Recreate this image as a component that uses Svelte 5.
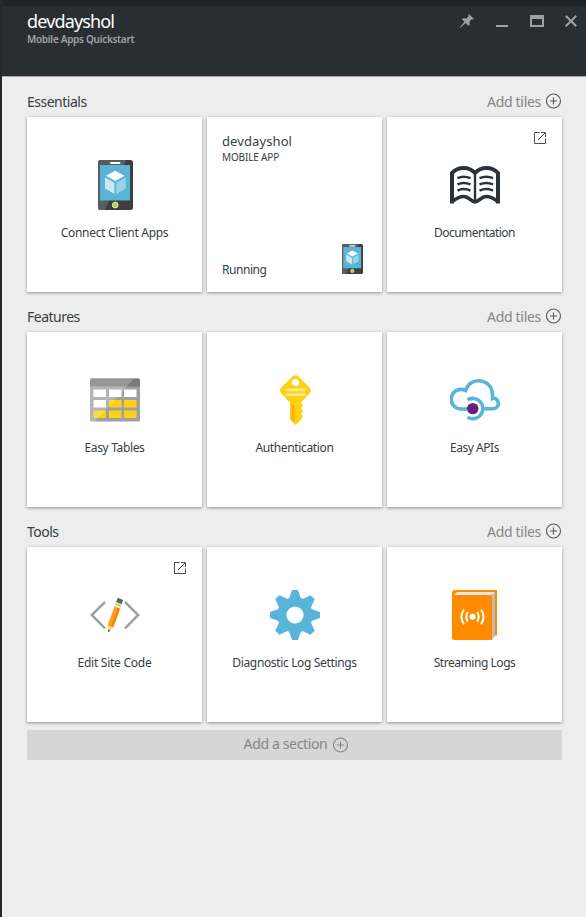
<script>
  const sections = [
    { title: 'Essentials', tiles: [
      { label: 'Connect Client Apps', icon: 'phone' },
      { label: 'devdayshol', resource: true },
      { label: 'Documentation', icon: 'book', external: true }
    ] },
    { title: 'Features', tiles: [
      { label: 'Easy Tables', icon: 'table' },
      { label: 'Authentication', icon: 'key' },
      { label: 'Easy APIs', icon: 'cloud' }
    ] },
    { title: 'Tools', tiles: [
      { label: 'Edit Site Code', icon: 'code', external: true },
      { label: 'Diagnostic Log Settings', icon: 'gear' },
      { label: 'Streaming Logs', icon: 'logs' }
    ] }
  ];
  const teeth = [0, 45, 90, 135, 180, 225, 270, 315];
</script>

{#snippet plus()}
  <svg class="plus" width="16" height="16" viewBox="0 0 16 16" fill="none" stroke="currentColor">
    <circle cx="7.500" cy="8" r="7" stroke-width="1.100" />
    <path d="M4 8h7M7.500 4.500v7" stroke-width="1.100" />
  </svg>
{/snippet}

{#snippet phone(w, h)}
  <svg width={w} height={h} viewBox="0 0 35 50">
    <rect width="35" height="50" rx="2.500" fill="#3e3e3e" />
    <path d="M2.500 0H28L7 50H2.500A2.500 2.500 0 0 1 0 47.500V2.500A2.500 2.500 0 0 1 2.500 0Z" fill="#5c5c5c" />
    <rect x="12" y="2" width="10.500" height="2" rx="1" fill="#fff" />
    <rect x="2" y="5" width="30" height="35.500" fill="#59b4d9" />
    <path d="M17.300 10.800 26.500 15.800 17.300 21 8 15.800Z" fill="#fff" />
    <path d="M7 17.500 16.500 22.800V34L7 28.500Z" fill="#cde8f4" />
    <path d="M27.800 17.500 18.200 22.800V34L27.800 28.500Z" fill="#9bd2e8" />
    <circle cx="17.200" cy="45" r="2.900" fill="#b8d432" stroke="#f4f8dc" stroke-width=".8" />
  </svg>
{/snippet}

{#snippet icon(name)}
  {#if name === 'phone'}
    {@render phone(35, 50)}
  {:else if name === 'book'}
    <svg width="50" height="50" viewBox="0 0 50 50" fill="none" stroke="#2b3238">
      <path d="M2 43.500V13Q6.500 8 13.500 8T25 13Q29.500 8 36.500 8T48 13V43.500" stroke-width="4" />
      <path d="M25 12V42" stroke-width="2.400" />
      <path d="M2 42Q8 36.500 14 36.500C19 36.500 21 42 25 42S31 36.500 36 36.500Q42 36.500 48 42" stroke-width="3.600" />
      <path d="M7.500 18.200Q13.500 15.200 20.500 18.200M7.500 24.400Q13.500 21.400 20.500 24.400M7.500 30.600Q13.500 27.600 20.500 30.600M29.500 18.200Q36.500 15.200 43 18.200M29.500 24.400Q36.500 21.400 43 24.400M29.500 30.600Q36.500 27.600 43 30.600" stroke-width="2.500" />
    </svg>
  {:else if name === 'table'}
    <svg width="50" height="50" viewBox="0 0 50 50">
      <rect y="4" width="50" height="43" rx="1.500" fill="#a0a0a0" transform="translate(0 -.5)" />
      <path d="M0 11.500V5Q0 3.500 1.500 3.500H48.500Q50 3.500 50 5V11.500Z" fill="#7a7a7a" />
      {#each [14.500, 25, 35.500] as y, row}
        {#each [3.500, 19, 34] as x, col}
          <rect {x} {y} width="12.500" height="7.500" fill={row === 2 || (row === 1 && col > 0) ? '#fcd116' : '#fff'} />
        {/each}
      {/each}
      <path d="M1.500 3.500H44L5 46.500H1.500Q0 46.500 0 45V5Q0 3.500 1.500 3.500Z" fill="#fff" opacity=".22" />
    </svg>
  {:else if name === 'key'}
    <svg width="50" height="50" viewBox="0 0 50 50">
      <path d="M22.500 1.500Q25.500-1.200 28.500 1.500L39.500 12.500Q42 15.500 39.500 18.500L31.500 27V29L33.200 30.500 31.500 32.500V34.500L33.200 36 31.500 38V39.500L33.200 41 31.500 43V44.500L25.500 50 20 44.500V27.500L11.200 18.500Q8.700 15.500 11.200 12.500Z" fill="#fcd116" />
      <circle cx="25.500" cy="7.500" r="3.500" fill="#fff" />
      <path d="M17 13.500H34.500A1 1 0 0 1 34.500 16.300H17A1 1 0 0 1 17 13.500M17 18.200H34.500A1 1 0 0 1 34.500 21H17A1 1 0 0 1 17 18.200" fill="#fee88b" />
      <path d="M21.500 29 24.800 30.500V47.500L21.500 44.500Z" fill="#ffb000" />
    </svg>
  {:else if name === 'cloud'}
    <svg width="50" height="50" viewBox="0 0 50 50" fill="none" stroke="#59b4d9" stroke-width="3.600">
      <path d="M20 34H12A9.800 9.800 0 1 1 15.500 15.500C18 9 23 5.800 28.500 5.800C36.500 5.800 42.500 12 42.500 19.500V23.500C46 22.500 48.300 25.500 48.300 28.500C48.300 31.500 46 33.700 43 33.700H33" />
      <path d="M17.500 24.800A10.200 10.200 0 1 1 17.500 42.300" />
      <circle cx="22.800" cy="33.600" r="5.700" fill="#68217a" stroke="none" />
    </svg>
  {:else if name === 'code'}
    <svg width="50" height="50" viewBox="0 0 50 50">
      <path d="M15 12 1.800 25 15 38.300M35 12 48.200 25 35 38.300" fill="none" stroke="#a0a0a0" stroke-width="2.500" />
      <g transform="translate(18.500 41.800) rotate(20)">
        <path d="M-3-6H3L.5 0H-.5Z" fill="#fcd57a" />
        <path d="M-.9-2H.9L.5 0H-.5Z" fill="#555" />
        <rect x="-3" y="-26" width="3" height="20" fill="#ff9c1a" />
        <rect y="-26" width="3" height="20" fill="#f58200" />
        <rect x="-3" y="-30.500" width="6" height="4.500" fill="#e5efc4" />
        <path d="M-3-28.500H3" stroke="#a3c94a" />
        <rect x="-3" y="-35" width="6" height="4.500" rx=".7" fill="#5f6268" />
      </g>
    </svg>
  {:else if name === 'gear'}
    <svg width="50" height="50" viewBox="-25 -25 50 50">
      {#each teeth as angle}
        <path d="M-6.500-15-2.900-25H2.900L6.500-15Z" transform="rotate({angle})" fill="#59b4d9" />
      {/each}
      <circle r="13.200" fill="none" stroke="#59b4d9" stroke-width="9.200" />
    </svg>
  {:else if name === 'logs'}
    <svg width="50" height="50" viewBox="0 0 50 50">
      <path d="M5 0H47V45.500H42V50H4Q2 50 2 48V3Q2 0 5 0Z" fill="#ff8c00" />
      <path d="M4 5 7 2H45L42 5Z" fill="#e6e6e6" />
      <path d="M42 5 45 2V46L42 49.500Z" fill="#bcbcbc" />
      <circle cx="22.500" cy="26.800" r="3" fill="#fff" />
      <path d="M17.800 22Q14.800 26.800 17.800 31.600M27.200 22Q30.200 26.800 27.200 31.600M14 19.500Q8.800 26.800 14 34.200M31 19.500Q36.200 26.800 31 34.200" fill="none" stroke="#fff" stroke-width="2" />
    </svg>
  {/if}
{/snippet}

<div class="blade">
  <header>
    <div class="heading">
      <h1>devdayshol</h1>
      <p>Mobile Apps Quickstart</p>
    </div>
    <div class="controls">
      <svg width="14" height="14" viewBox="0 0 14 14" fill="#a0a1a8"><path d="M8.800 0 14 5 12.500 5.500 11.500 5.200 9.500 7.500 9.700 11 8.400 11.700 5.600 9 .4 13.700 0 13.300 4.500 7.800 2 5.300 3 4.200 6.500 4.400 8.700 2.300 8.200 1Z" /></svg>
      <svg width="12" height="14" viewBox="0 0 12 14"><path d="M0 12H12" stroke="#a0a1a8" stroke-width="2" /></svg>
      <svg width="14" height="14" viewBox="0 0 14 14"><path d="M0 1H14V13H0ZM2 5V11H12V5Z" fill="#a0a1a8" fill-rule="evenodd" /></svg>
      <svg width="12" height="14" viewBox="0 0 12 14"><path d="M.7 1.700 11.300 12.300M11.300 1.700.7 12.300" stroke="#a0a1a8" stroke-width="2" /></svg>
    </div>
  </header>

  <main>
    {#each sections as section}
      <section>
        <div class="section-head">
          <h2>{section.title}</h2>
          <div class="add"><span>Add tiles</span>{@render plus()}</div>
        </div>
        <div class="tiles">
          {#each section.tiles as tile}
            {#if tile.resource}
              <div class="tile resource">
                <div class="name">{tile.label}</div>
                <div class="kind">MOBILE APP</div>
                <div class="status"><span>Running</span>{@render phone(21, 30)}</div>
              </div>
            {:else}
              <div class="tile">
                <div class="icon {tile.icon}">{@render icon(tile.icon)}</div>
                <div class="label {tile.icon}">{tile.label}</div>
                {#if tile.external}
                  <svg class="external" width="12" height="12" viewBox="0 0 12 12" fill="none" stroke="#4a5055"><path d="M5.500.5H.5V11.500H11.500V6.500M7 .5H11.500V5M11.200.8 4 8" /></svg>
                {/if}
              </div>
            {/if}
          {/each}
        </div>
      </section>
    {/each}
    <div class="add-section"><span>Add a section</span>{@render plus()}</div>
  </main>
</div>

<style>
  :global(body) { margin: 0; }
  .blade {
    box-sizing: border-box;
    height: 917px;
    border-left: 2px solid #24282c;
    background: #ededed;
    color: #383d43;
    font-family: "Noto Sans", "Open Sans", sans-serif;
    overflow: hidden;
  }
  h1, h2, p { margin: 0; font-weight: 400; }
  svg { display: block; flex: none; }
  header {
    box-sizing: border-box;
    height: 77px;
    padding: 0 9px 0 25px;
    display: flex;
    justify-content: space-between;
    background: #292e32;
    border-top: 6px solid #1f2327;
    border-bottom: 1px solid #a8a9ac;
  }
  .heading { padding-top: 4px; white-space: nowrap; }
  h1 { font-size: 18px; line-height: 22px; letter-spacing: -.85px; color: #fff; }
  header p { font-size: 10px; line-height: 14px; font-weight: 600; letter-spacing: -.3px; color: #a0a1a8; }
  .controls { display: flex; gap: 22px; padding-top: 8px; }
  .controls svg:nth-child(3) { margin-right: -1px; }
  main { padding: 0 24px 0 25px; }
  .section-head { height: 40px; display: flex; justify-content: space-between; align-items: flex-start; }
  h2 { font-size: 14px; line-height: 20px; margin-top: 15px; letter-spacing: -.5px; }
  .add { display: flex; align-items: center; gap: 5px; height: 20px; margin-top: 14px; font-size: 14px; letter-spacing: -.3px; color: #828788; }
  .add .plus { color: #555b61; }
  .tiles { display: flex; gap: 5px; }
  .tile {
    position: relative;
    box-sizing: border-box;
    width: 175px;
    height: 175px;
    padding-top: 43px;
    background: #fff;
    box-shadow: 0 1px 3px rgba(0, 0, 0, .4);
    white-space: nowrap;
  }
  .icon { height: 50px; display: flex; justify-content: center; }
  .icon.phone { padding-left: 2px; }
  .label { margin-top: 14px; text-align: center; font-size: 12px; line-height: 18px; letter-spacing: -.35px; }
  .label.phone { letter-spacing: -.3px; }
  .label.book { letter-spacing: -.52px; }
  .label.code { letter-spacing: -.25px; }
  .label.logs, .label.cloud { letter-spacing: -.45px; }
  .external { position: absolute; top: 15px; right: 16px; }
  .resource { padding: 15px 19px 15px 15px; display: flex; flex-direction: column; }
  .name { font-size: 13px; line-height: 18px; letter-spacing: .1px; }
  .kind { font-size: 10px; line-height: 14px; letter-spacing: -.15px; }
  .status { margin-top: auto; display: flex; justify-content: space-between; align-items: flex-end; font-size: 12px; line-height: 18px; letter-spacing: -.45px; }
  .status span { position: relative; top: 2px; }
  .status svg { position: relative; top: -3px; }
  .add-section {
    height: 30px;
    margin-top: 8px;
    padding-left: 4px;
    display: flex;
    align-items: center;
    justify-content: center;
    gap: 6px;
    background: #d6d6d6;
    color: #828788;
    font-size: 14px;
    letter-spacing: -.35px;
  }
  .add-section span { line-height: 20px; position: relative; top: -1px; }
</style>
